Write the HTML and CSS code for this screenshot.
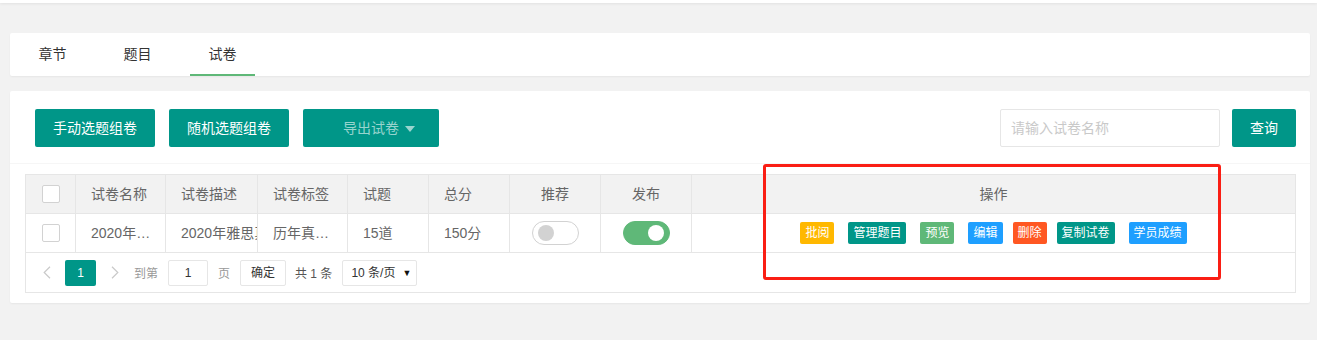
FILE: index.html
```html
<!DOCTYPE html>
<html lang="zh-CN">
<head>
<meta charset="utf-8">
<title>试卷</title>
<link rel="stylesheet" href="styles.css">
</head>
<body>
<div class="topbar"></div>
<main class="page">
  <div class="card tabs">
    <ul class="tab-title">
      <li>章节</li>
      <li>题目</li>
      <li class="active">试卷</li>
    </ul>
  </div>

  <div class="card panel">
    <div class="toolbar">
      <div class="btns">
        <button class="btn">手动选题组卷</button>
        <button class="btn">随机选题组卷</button>
        <button class="btn btn-export">导出试卷<span class="caret"></span></button>
      </div>
      <div class="search">
        <input class="search-input" type="text" placeholder="请输入试卷名称">
        <button class="btn btn-query">查询</button>
      </div>
    </div>

    <div class="table-section">
      <div class="table-wrap">
        <div class="grid head">
          <div class="cell center"><span class="checkbox"></span></div>
          <div class="cell">试卷名称</div>
          <div class="cell">试卷描述</div>
          <div class="cell">试卷标签</div>
          <div class="cell">试题</div>
          <div class="cell">总分</div>
          <div class="cell center">推荐</div>
          <div class="cell center">发布</div>
          <div class="cell center last">操作</div>
        </div>
        <div class="grid body">
          <div class="cell center"><span class="checkbox"></span></div>
          <div class="cell tightpad"><span class="ellip">2020年雅思真题</span></div>
          <div class="cell"><span class="clip">2020年雅思真题</span></div>
          <div class="cell tightpad"><span class="ellip">历年真题试卷</span></div>
          <div class="cell">15道</div>
          <div class="cell">150分</div>
          <div class="cell center"><span class="switch"><i class="knob"></i></span></div>
          <div class="cell center"><span class="switch on"><i class="knob"></i></span></div>
          <div class="cell center last">
            <div class="ops">
              <span class="op warm">批阅</span>
              <span class="op teal">管理题目</span>
              <span class="op green">预览</span>
              <span class="op blue">编辑</span>
              <span class="op red tight">删除</span>
              <span class="op teal tight">复制试卷</span>
              <span class="op blue">学员成绩</span>
            </div>
          </div>
        </div>
        <div class="pager">
          <svg class="arrow" width="8" height="13" viewBox="0 0 8 13"><path d="M7 0.8 L1.2 6.5 L7 12.2" fill="none" stroke="#c9c9c9" stroke-width="1.2"/></svg>
          <span class="curr">1</span>
          <svg class="arrow next" width="8" height="13" viewBox="0 0 8 13"><path d="M1 0.8 L6.8 6.5 L1 12.2" fill="none" stroke="#c9c9c9" stroke-width="1.2"/></svg>
          <span class="skip-label">到第</span>
          <span class="page-input">1</span>
          <span class="skip-label small-gap">页</span>
          <span class="confirm">确定</span>
          <span class="count">共 1 条</span>
          <span class="limits">10 条/页<span class="tri">▼</span></span>
        </div>
      </div>
    </div>
  </div>
  <div class="annot"></div>
</main>
</body>
</html>
```

FILE: styles.css
```css
* { box-sizing: border-box; }

html, body {
  margin: 0;
  padding: 0;
}

body {
  background: #f2f2f2;
  font-family: "Liberation Sans", "Noto Sans CJK SC", sans-serif;
  font-size: 14px;
  color: #666;
  width: 1317px;
  height: 340px;
  overflow: hidden;
  position: relative;
}

.topbar {
  height: 3px;
  background: #fff;
  box-shadow: 0 1px 3px rgba(0, 0, 0, 0.07);
}

.page {
  padding: 30px 7px 0 10px;
}

.card {
  background: #fff;
  border-radius: 2px;
  box-shadow: 0 1px 2px rgba(0, 0, 0, 0.05);
}

/* tabs */
.tabs {
  height: 43px;
}

.tab-title {
  list-style: none;
  margin: 0;
  padding: 0 0 0 10px;
  display: flex;
  height: 43px;
}

.tab-title li {
  width: 65px;
  margin-right: 20px;
  text-align: center;
  line-height: 42px;
  height: 43px;
  color: #333;
  font-size: 14px;
  position: relative;
}

.tab-title li.active::after {
  content: "";
  position: absolute;
  left: 0;
  right: 0;
  bottom: 0;
  height: 2px;
  background: #5fb878;
}

/* panel */
.panel {
  margin-top: 15px;
}

.toolbar {
  display: flex;
  justify-content: space-between;
  align-items: center;
  padding: 18px 14px 16px 25px;
  border-bottom: 1px solid #f6f6f6;
}

.btns, .search {
  display: flex;
  align-items: center;
}

.btn {
  height: 38px;
  line-height: 38px;
  padding: 0 18px;
  background: #009688;
  color: #fff;
  border: none;
  border-radius: 2px;
  font-family: inherit;
  font-size: 14px;
  white-space: nowrap;
  display: inline-flex;
  align-items: center;
}

.btns .btn + .btn {
  margin-left: 14px;
}

.btn-export {
  padding: 0 24px 0 40px;
  color: rgba(255, 255, 255, 0.6);
}

.caret {
  display: inline-block;
  width: 0;
  height: 0;
  margin-left: 6px;
  margin-top: 2px;
  border-left: 5px solid transparent;
  border-right: 5px solid transparent;
  border-top: 6px solid rgba(255, 255, 255, 0.6);
}

.search-input {
  width: 220px;
  height: 38px;
  border: 1px solid #e6e6e6;
  border-radius: 2px;
  padding: 0 10px;
  font-family: inherit;
  font-size: 14px;
  color: #333;
  outline: none;
}

.search-input::placeholder {
  color: #c9c9c9;
}

.btn-query {
  margin-left: 12px;
}

/* table */
.table-section {
  padding: 10px 14px 10px 15px;
}

.table-wrap {
  border: 1px solid #e6e6e6;
}

.grid {
  display: grid;
  grid-template-columns: 50px 90px 92px 90px 81px 81px 91px 91px 1fr;
  border-bottom: 1px solid #e6e6e6;
}

.head {
  background: #f2f2f2;
}

.cell {
  height: 38px;
  line-height: 38px;
  padding: 0 15px;
  border-right: 1px solid #e6e6e6;
  color: #666;
  font-size: 14px;
  white-space: nowrap;
  overflow: hidden;
}

.cell.tightpad {
  padding-right: 10px;
}

.cell.last {
  border-right: none;
}

.cell.center {
  text-align: center;
  padding: 0;
  display: flex;
  align-items: center;
  justify-content: center;
}

.ellip {
  display: block;
  overflow: hidden;
  text-overflow: ellipsis;
  white-space: nowrap;
}

.clip {
  display: block;
  overflow: hidden;
  white-space: nowrap;
  width: calc(100% + 15px);
}

.checkbox {
  display: block;
  width: 18px;
  height: 18px;
  border: 1px solid #d2d2d2;
  border-radius: 2px;
  background: #fff;
}

.switch {
  position: relative;
  display: block;
  width: 47px;
  height: 24px;
  border: 1px solid #d2d2d2;
  border-radius: 20px;
  background: #fff;
}

.switch .knob {
  position: absolute;
  left: 5px;
  top: 3px;
  width: 16px;
  height: 16px;
  border-radius: 50%;
  background: #d2d2d2;
}

.switch.on {
  background: #5fb878;
  border-color: #5fb878;
}

.switch.on .knob {
  left: auto;
  right: 5px;
  background: #fff;
}

.ops {
  display: flex;
  align-items: center;
}

.op {
  height: 22px;
  line-height: 22px;
  padding: 0 5px;
  font-size: 12px;
  color: #fff;
  border-radius: 2px;
  white-space: nowrap;
  margin-left: 14px;
}

.op:first-child { margin-left: 0; }
.op.tight { margin-left: 10px; }

.op.warm { background: #ffb800; }
.op.teal { background: #009688; }
.op.green { background: #5fb878; }
.op.blue { background: #1e9fff; }
.op.red { background: #ff5722; }

/* pager */
.pager {
  height: 39px;
  display: flex;
  align-items: center;
  padding-left: 17px;
  font-size: 12px;
}

.arrow { display: block; }

.curr {
  margin-left: 14px;
  width: 31px;
  height: 26px;
  line-height: 26px;
  text-align: center;
  background: #009688;
  color: #fff;
  border-radius: 2px;
}

.arrow.next { margin-left: 15px; }

.skip-label {
  margin-left: 15px;
  color: #999;
}

.skip-label.small-gap { margin-left: 10px; }

.page-input {
  margin-left: 10px;
  width: 40px;
  height: 26px;
  line-height: 24px;
  border: 1px solid #e6e6e6;
  border-radius: 2px;
  text-align: center;
  color: #333;
}

.confirm {
  margin-left: 10px;
  width: 46px;
  height: 26px;
  line-height: 24px;
  border: 1px solid #e6e6e6;
  border-radius: 2px;
  text-align: center;
  color: #333;
}

.count {
  margin-left: 9px;
  color: #555;
}

.limits {
  margin-left: 10px;
  width: 75px;
  height: 26px;
  line-height: 24px;
  border: 1px solid #e6e6e6;
  border-radius: 2px;
  padding-left: 8px;
  color: #333;
  position: relative;
}

.tri {
  position: absolute;
  right: 5px;
  top: 0;
  font-size: 9px;
  color: #111;
}

/* annotation overlay */
.annot {
  position: absolute;
  left: 763px;
  top: 164px;
  width: 458px;
  height: 116px;
  border: 3px solid #fa1e14;
  border-radius: 3px;
  pointer-events: none;
}
```
